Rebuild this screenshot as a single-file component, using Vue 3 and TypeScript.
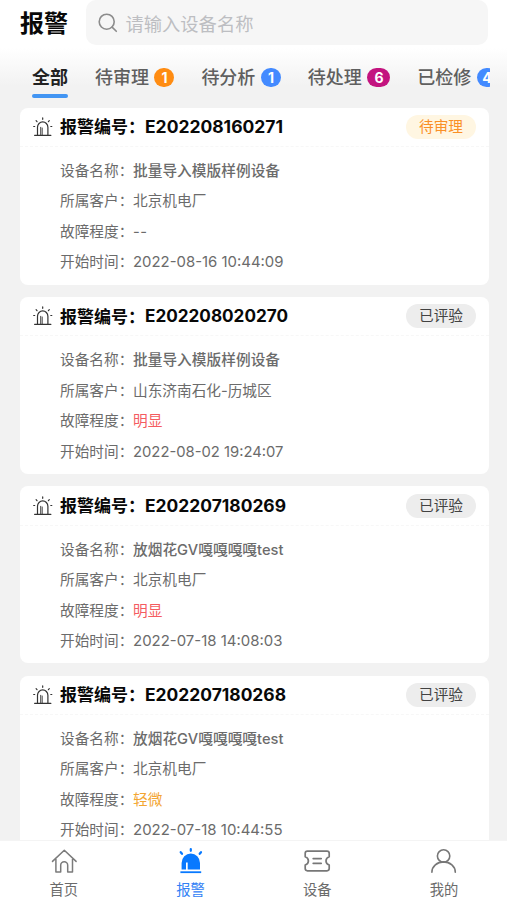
<script setup lang="ts">
interface Tab {
  label: string
  count?: number
  tone?: 'orange' | 'blue' | 'magenta'
}

interface Alarm {
  code: string
  codeWidth: number
  status: string
  pending: boolean
  device: string
  customer: string
  severity: string
  level: 'none' | 'severe' | 'slight'
  time: string
  timeWidth: number
}

const tabs: Tab[] = [
  { label: '全部' },
  { label: '待审理', count: 1, tone: 'orange' },
  { label: '待分析', count: 1, tone: 'blue' },
  { label: '待处理', count: 6, tone: 'magenta' },
  { label: '已检修', count: 4, tone: 'blue' },
]

const alarms: Alarm[] = [
  { code: 'E202208160271', codeWidth: 139, status: '待审理', pending: true, device: '批量导入模版样例设备', customer: '北京机电厂', severity: '--', level: 'none', time: '2022-08-16 10:44:09', timeWidth: 151 },
  { code: 'E202208020270', codeWidth: 144, status: '已评验', pending: false, device: '批量导入模版样例设备', customer: '山东济南石化-历城区', severity: '明显', level: 'severe', time: '2022-08-02 19:24:07', timeWidth: 151 },
  { code: 'E202207180269', codeWidth: 142, status: '已评验', pending: false, device: '放烟花GV嘎嘎嘎嘎test', customer: '北京机电厂', severity: '明显', level: 'severe', time: '2022-07-18 14:08:03', timeWidth: 150 },
  { code: 'E202207180268', codeWidth: 142, status: '已评验', pending: false, device: '放烟花GV嘎嘎嘎嘎test', customer: '北京机电厂', severity: '轻微', level: 'slight', time: '2022-07-18 10:44:55', timeWidth: 150 },
]
</script>

<template>
  <div class="page">
    <header class="top">
      <h1>报警</h1>
      <div class="search">
        <svg width="20" height="20" viewBox="0 0 20 20" fill="none" stroke="#8c8c8c" stroke-width="1.6" stroke-linecap="round">
          <circle cx="8.7" cy="8.7" r="7.5" />
          <path d="M14.1 14.1L18.3 18.3" />
        </svg>
        <span>请输入设备名称</span>
      </div>
    </header>

    <nav class="tabs">
      <div v-for="(tab, i) in tabs" :key="tab.label" class="tab" :class="{ active: i === 0 }">
        <span>{{ tab.label }}</span>
        <b v-if="tab.count" class="badge" :class="tab.tone">{{ tab.count }}</b>
      </div>
    </nav>

    <main class="list">
      <article v-for="alarm in alarms" :key="alarm.code" class="card">
        <div class="card-head">
          <svg class="siren" width="20" height="20" viewBox="0 0 20 20" fill="none" stroke="#333" stroke-width="1.2" stroke-linecap="round">
            <path d="M4.5 17.7V10.3a5.2 5.4 0 0 1 10.4 0v7.4M1.6 18.3H17.9" />
            <path d="M7.7 10.3V17.7M9.2 11V17.7" stroke-width=".9" />
            <path d="M9.7 .9V2.3M3.1 3.7L4 4.7M16.3 3.7L15.4 4.7M.7 9.5H1.7M17.8 9.5H18.8" />
          </svg>
          <span class="head-label">报警编号：</span>
          <svg class="code" :width="alarm.codeWidth" height="24">
            <text x="0" y="18" :textLength="alarm.codeWidth - 1" lengthAdjust="spacingAndGlyphs">{{ alarm.code }}</text>
          </svg>
          <span class="status" :class="{ pending: alarm.pending }">{{ alarm.status }}</span>
        </div>
        <dl>
          <div class="row"><dt>设备名称：</dt><dd class="device">{{ alarm.device }}</dd></div>
          <div class="row"><dt>所属客户：</dt><dd>{{ alarm.customer }}</dd></div>
          <div class="row"><dt>故障程度：</dt><dd :class="alarm.level">{{ alarm.severity }}</dd></div>
          <div class="row">
            <dt>开始时间：</dt>
            <dd>
              <svg class="time" :width="alarm.timeWidth" height="20">
                <text x="0" y="15" :textLength="alarm.timeWidth - 0.5" lengthAdjust="spacingAndGlyphs">{{ alarm.time }}</text>
              </svg>
            </dd>
          </div>
        </dl>
      </article>
    </main>

    <footer class="bottom">
      <a class="item">
        <svg width="28" height="28" viewBox="0 0 28 28" fill="none" stroke="#7b7b7b" stroke-width="1.5" stroke-linecap="round" stroke-linejoin="round">
          <path d="M2.5 14.4L14.3 3.2 26.1 14.4M5.9 12V25H10.7V18.3a3.5 3.5 0 0 1 7 0V25h4.8V12" />
        </svg>
        <span>首页</span>
      </a>
      <a class="item current">
        <svg width="28" height="28" viewBox="0 0 28 28">
          <path d="M4.6 22.6V16a9.2 9.6 0 0 1 18.4 0V22.6H10.7V15.6H9V22.6Z" fill="#0879ff" />
          <path d="M3.4 25.2H24.2" stroke="#0879ff" stroke-width="1.8" />
          <path d="M13.8 2V3.8M3.7 5.2L5 6.8M24 5.2L22.7 6.8" stroke="#0879ff" stroke-width="2.2" stroke-linecap="round" />
        </svg>
        <span>报警</span>
      </a>
      <a class="item">
        <svg width="28" height="28" viewBox="0 0 28 28" fill="none" stroke="#777" stroke-width="1.7" stroke-linecap="round" stroke-linejoin="round">
          <path d="M4.4 4.1H24Q26.2 4.1 26.2 6.3V9.8Q23 11 23 13.9T26.2 18V21.6Q26.2 23.8 24 23.8H4.4Q2.2 23.8 2.2 21.6V18Q5.4 16.8 5.4 13.9T2.2 9.8V6.3Q2.2 4.1 4.4 4.1Z" />
          <path d="M10.2 11.6H18.2M10.2 16.3H18.2" />
        </svg>
        <span>设备</span>
      </a>
      <a class="item">
        <svg width="28" height="28" viewBox="0 0 28 28" fill="none" stroke="#777" stroke-width="1.6" stroke-linecap="round">
          <circle cx="13.6" cy="9" r="6.2" />
          <path d="M1.9 25.2a11.7 10.3 0 0 1 23.4 0" />
        </svg>
        <span>我的</span>
      </a>
    </footer>
  </div>
</template>

<style>
body {
  margin: 0;
  overflow: hidden;
}
</style>

<style scoped>
.page {
  width: 507px;
  height: 900px;
  display: flex;
  flex-direction: column;
  overflow: hidden;
  background: linear-gradient(#fff 48px, #f2f2f2 86px);
  font-family: Inter, "Noto Sans CJK SC", sans-serif;
  color: #6b6b6b;
  white-space: nowrap;
}
.top {
  flex: none;
  height: 45px;
  display: flex;
  padding: 0 19px 0 20px;
}
h1 {
  margin: 0;
  width: 66px;
  font-size: 24px;
  line-height: 48px;
  font-weight: 700;
  color: #080808;
}
.search {
  flex: 1;
  display: flex;
  align-items: center;
  gap: 7.5px;
  padding: 0 0 0 12px;
  box-sizing: border-box;
  border-radius: 10px;
  background: #f6f6f6;
  font-size: 18.3px;
  color: #bdbec2;
}
.search svg {
  flex: none;
}
.tabs {
  flex: none;
  display: flex;
  gap: 26.9px;
  height: 62.5px;
  width: 458px;
  margin-left: 32px;
  overflow: hidden;
}
.tab {
  flex: none;
  display: flex;
  align-items: center;
  height: 52px;
  box-sizing: border-box;
  padding-top: 13px;
  gap: 5.6px;
  font-size: 18px;
  line-height: 26px;
  font-weight: 500;
  color: #5f5f5f;
}
.active {
  flex-direction: column;
  gap: 3px;
  padding-top: 20px;
  color: #222;
  font-weight: 700;
}
.active::after {
  content: "";
  width: 36px;
  height: 3.5px;
  flex: none;
  border-radius: 2px;
  background: #4295f3;
}
.badge {
  width: 20px;
  height: 19px;
  border-radius: 10px;
  color: #fff;
  font-size: 14px;
  line-height: 19px;
  font-weight: 700;
  text-align: center;
}
.orange {
  background: #ff8c12;
}
.blue {
  background: #438aff;
}
.magenta {
  width: 23px;
  background: #c3147f;
}
.list {
  flex: 1;
  min-height: 0;
  overflow: hidden;
  display: flex;
  flex-direction: column;
  gap: 12.4px;
  padding: 0 18.5px 0 19.5px;
}
.card {
  flex: none;
  height: 177px;
  border-radius: 8px;
  background: #fff;
}
.card-head {
  display: flex;
  align-items: center;
  height: 39.5px;
  box-sizing: border-box;
  padding: 0 12.5px 0 13px;
  border-bottom: 1px dashed #f7f7f7;
  font-size: 17px;
  font-weight: 700;
  color: #080808;
}
.siren {
  flex: none;
  margin-right: 7.5px;
}
.head-label {
  width: 85px;
  padding-bottom: 2px;
}
.code {
  overflow: visible;
  font-size: 17px;
  fill: #080808;
}
.status {
  width: 70px;
  height: 24px;
  margin-left: auto;
  border-radius: 12px;
  background: #ededed;
  color: #424242;
  font-size: 14.67px;
  line-height: 24px;
  font-weight: 400;
  text-align: center;
}
.pending {
  background: #fff6e2;
  color: #fa9026;
}
dl {
  margin: 0;
  padding: 8.5px 0 0 40.5px;
}
.row {
  display: flex;
  height: 30.5px;
  align-items: center;
  font-size: 14.67px;
  line-height: 20px;
}
dt {
  width: 73px;
}
dd {
  margin: 0;
}
.device {
  font-weight: 500;
  letter-spacing: 0.05px;
}
.severe {
  color: #f45b60;
}
.slight {
  color: #f3a531;
}
.none {
  letter-spacing: 0.4px;
}
.time {
  display: block;
  overflow: visible;
  fill: #6b6b6b;
}
.bottom {
  flex: none;
  height: 60.5px;
  box-sizing: border-box;
  display: flex;
  border-top: 1px solid #f4f4f4;
  background: #fff;
}
.item {
  flex: 1;
  display: flex;
  flex-direction: column;
  align-items: center;
  gap: 5px;
  padding-top: 6px;
  padding-left: 1px;
  font-size: 14.3px;
  line-height: 20px;
  color: #6b6b6b;
}
.current {
  color: #3281f5;
}
</style>
